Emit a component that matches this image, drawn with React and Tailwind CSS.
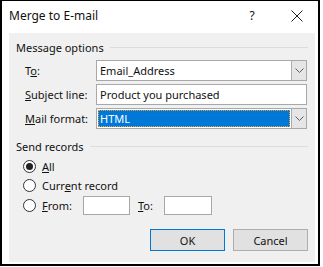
import React from "react";

const font = { fontFamily: '"Noto Sans", "Open Sans", sans-serif' };

function Chevron() {
  return (
    <svg width="9" height="5" viewBox="0 0 9 5" className="block">
      <path d="M0.5 0.5 L4.5 4.5 L8.5 0.5" fill="none" stroke="#606060" strokeWidth="1" />
    </svg>
  );
}

function DropButton() {
  return (
    <div className="w-[15px] h-full bg-[#e5e5e5] border-l border-[#adadad] flex items-center justify-center">
      <Chevron />
    </div>
  );
}

function Radio({ checked }) {
  return (
    <div className="w-[13px] h-[13px] rounded-full border border-[#333333] bg-white flex items-center justify-center">
      {checked && <div className="w-[7px] h-[7px] rounded-full bg-[#222222]" />}
    </div>
  );
}

function GroupHeader({ children }) {
  return (
    <div className="h-[16px] flex items-center pl-[7px] pr-[7px]">
      <span className="whitespace-nowrap">{children}</span>
      <div className="flex-1 h-px bg-[#dcdcdc] ml-[6px]" />
    </div>
  );
}

export default function App() {
  return (
    <div className="w-[323px] h-[267px] bg-white text-[#111] text-[11px] leading-none" style={font}>
      <div className="w-[320px] h-[266px] border-l-2 border-r-2 border-b-2 border-t border-black bg-white flex flex-col">
        {/* Title bar */}
        <div className="h-[32px] flex items-center pl-[7px] pr-[15px] text-[12px]">
          <span className="flex-1 -mt-[3px]">Merge to E-mail</span>
          <span className="w-[10px] -mt-[3px] mr-[34px] text-center">?</span>
          <svg width="12" height="12" viewBox="0 0 12 12" className="-mt-[3px]">
            <path d="M0.5 0.5 L11.5 11.5 M11.5 0.5 L0.5 11.5" stroke="#222" strokeWidth="1" fill="none" />
          </svg>
        </div>

        {/* Body */}
        <div className="ml-[7px] mr-[3px] h-[229px] bg-[#f0f0f0] flex flex-col pt-[6px]">
          <GroupHeader>Message options</GroupHeader>

          <div className="flex flex-col gap-[3px] mt-[5px] pl-[16px] pr-[8px]">
            <div className="flex items-center h-[21px]">
              <span className="w-[71px]">T<u>o</u>:</span>
              <div className="flex-1 h-full border border-[#a8a8a8] bg-white flex">
                <span className="flex-1 flex items-center pl-[3px]">Email_Address</span>
                <DropButton />
              </div>
            </div>
            <div className="flex items-center h-[21px]">
              <span className="w-[71px]"><u>S</u>ubject line:</span>
              <div className="flex-1 h-full border border-[#a8a8a8] bg-white flex items-center pl-[3px]">
                Product you purchased
              </div>
            </div>
            <div className="flex items-center h-[21px]">
              <span className="w-[71px]"><u>M</u>ail format:</span>
              <div className="flex-1 h-full border border-[#a8a8a8] bg-white flex">
                <div className="flex-1 p-[1px]">
                  <div className="h-full bg-[#0078d7] border border-dotted border-[#e8a040] text-white flex items-center pl-[1px]">
                    HTML
                  </div>
                </div>
                <DropButton />
              </div>
            </div>
          </div>

          <div className="mt-[9px]">
            <GroupHeader>Send records</GroupHeader>
          </div>

          <div className="flex flex-col mt-[3px] pl-[14px]">
            <div className="h-[19px] flex items-center">
              <Radio checked />
              <span className="ml-[6px]"><u>A</u>ll</span>
            </div>
            <div className="h-[19px] flex items-center">
              <Radio />
              <span className="ml-[6px]">Curr<u>e</u>nt record</span>
            </div>
            <div className="h-[21px] flex items-center">
              <Radio />
              <span className="ml-[6px] w-[41px]"><u>F</u>rom:</span>
              <div className="w-[47px] h-[19px] border border-[#a8a8a8] bg-white" />
              <span className="ml-[8px] w-[26px]"><u>T</u>o:</span>
              <div className="w-[48px] h-[19px] border border-[#a8a8a8] bg-white" />
            </div>
          </div>

          <div className="flex mt-[13px] pl-[141px] pr-[7px]">
            <div className="w-[75px] h-[22px] border border-[#0078d7] bg-[#e1e1e1] flex items-center justify-center">
              OK
            </div>
            <div className="flex-1" />
            <div className="w-[75px] h-[22px] border border-[#adadad] bg-[#e1e1e1] flex items-center justify-center">
              Cancel
            </div>
          </div>
        </div>
      </div>
    </div>
  );
}
